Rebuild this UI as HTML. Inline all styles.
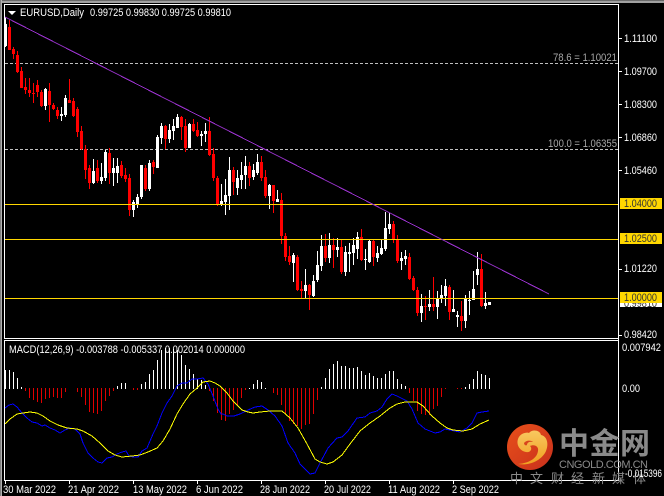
<!DOCTYPE html>
<html><head><meta charset="utf-8"><style>
html,body{margin:0;padding:0;background:#000;width:664px;height:496px;overflow:hidden}
svg{display:block}
text{font-family:"Liberation Sans","Noto Sans CJK SC",sans-serif;font-size:11px;fill:#fff}
.y{fill:#333}
</style></head><body>
<svg width="664" height="496" viewBox="0 0 664 496" xmlns="http://www.w3.org/2000/svg">
<rect width="664" height="496" fill="#000"/>
<g shape-rendering="crispEdges">
<rect width="664" height="1" fill="#6a6a6a"/><rect y="1" width="664" height="2" fill="#a0a0a0"/>
<rect width="1" height="496" fill="#808080"/><rect x="1" width="1" height="496" fill="#b0b0b0"/>
<path d="M4.5 4V339M4 4.5H619M618.5 4V481M4 338.5H619M4 340.5H619M4.5 340V481M4 480.5H619" stroke="#fff" fill="none"/>
<path d="M619 38.5h3M619 71.5h3M619 104.5h3M619 137.5h3M619 170.5h3M619 269.5h3M619 335.5h3M5.500 481v3M69.500 481v3M133.500 481v3M197.500 481v3M261.500 481v3M325.500 481v3M389.500 481v3M453.500 481v3" stroke="#fff" fill="none"/>
<path d="M5 63.500H618M5 149.500H618" stroke="#c0c0c0" stroke-dasharray="3 2" fill="none"/>
</g>
<!-- candles -->
<g shape-rendering="crispEdges" fill="none">
<path stroke="#fff" d="M5.500 17V47M45.500 88V110M61.500 107V121M65.500 95V117M93.500 159V184M101.500 163V184M105.500 150V181M113.500 158V186M117.500 158V183M133.500 200V217M137.500 194V208M141.500 165V199M149.500 160V191M157.500 135V168M161.500 123V144M169.500 124V143M173.500 119V140M177.500 114V128M189.500 123V148M201.500 131V146M205.500 123V142M221.500 184V206M225.500 179V215M229.500 157V210M237.500 170V195M241.500 162V189M245.500 156V189M253.500 164V180M257.500 154V175M269.500 184V209M277.500 190V202M293.500 253V282M305.500 269V298M313.500 275V297M317.500 251V282M321.500 235V271M329.500 233V263M337.500 238V257M345.500 246V276M349.500 243V272M353.500 238V265M357.500 232V259M365.500 249V270M369.500 240V263M377.500 246V262M381.500 239V255M385.500 212V251M389.500 213V234M401.500 252V270M405.500 250V265M421.500 294V322M429.500 290V311M437.500 291V319M441.500 285V303M445.500 279V306M453.500 290V312M457.500 311V327M465.500 295V328M469.500 291V315M473.500 271V300M477.500 252V285M485.500 292V309"/>
<path stroke="#fff" stroke-width="3" d="M5.500 24V46M45.500 89V106M61.500 114V116M65.500 98V115M93.500 171V183M101.500 177V181M105.500 152V178M113.500 168V173M117.500 166V173M133.500 202V210M137.500 197V204M141.500 165V197M149.500 163V189M157.500 137V168M161.500 126V138M169.500 130V139M173.500 126V131M177.500 117V128M189.500 124V148M201.500 134V136M205.500 131V134M221.500 201V205M225.500 195V202M229.500 170V196M237.500 178V188M241.500 175V180M245.500 166V175M253.500 170V177M257.500 162V173M269.500 185V196M277.500 199V202M293.500 255V263M305.500 285V291M313.500 281V296M317.500 265V280M321.500 246V266M329.500 245V258M337.500 247V250M345.500 252V272M349.500 252V254M353.500 245V253M357.500 237V249M365.500 259V260M369.500 241V262M377.500 253V258M381.500 248V254M385.500 228V249M389.500 224V229M401.500 258V261M405.500 256V259M421.500 306V313M429.500 304V307M437.500 299V307M441.500 295V299M445.500 286V296M453.500 309V312M457.500 315V317M465.500 299V321M469.500 300V301M473.500 289V300M477.500 269V275M485.500 303V306M489.500 302V305"/>
<path stroke="#f00" d="M9.500 20V50M13.500 47V59M17.500 51V73M21.500 67V88M25.500 78V94M29.500 78V97M33.500 83V103M37.500 80V97M41.500 90V107M49.500 83V122M53.500 103V110M57.500 107V119M69.500 79V103M73.500 98V117M77.500 107V137M81.500 126V150M85.500 145V179M89.500 165V189M97.500 160V183M109.500 148V184M121.500 161V178M125.500 168V182M129.500 174V216M145.500 165V191M153.500 160V174M165.500 125V149M181.500 116V140M185.500 119V152M193.500 119V132M197.500 122V137M209.500 117V156M213.500 148V181M217.500 176V206M233.500 167V195M249.500 162V186M261.500 156V181M265.500 170V198M273.500 185V213M281.500 193V244M285.500 233V261M289.500 246V265M297.500 255V291M301.500 281V298M309.500 284V310M325.500 234V262M333.500 238V268M341.500 240V274M361.500 229V261M373.500 240V266M393.500 221V243M397.500 235V263M409.500 253V280M413.500 276V291M417.500 287V316M425.500 296V320M433.500 277V311M449.500 285V320M461.500 301V331M481.500 254V307"/>
<path stroke="#f00" stroke-width="3" d="M9.500 27V50M13.500 49V54M17.500 55V72M21.500 71V88M25.500 87V90M29.500 90V93M33.500 93V94M37.500 85V92M41.500 92V106M49.500 91V105M53.500 105V109M57.500 110V116M69.500 100V103M73.500 101V116M77.500 109V132M81.500 131V149M85.500 149V170M89.500 168V183M97.500 168V181M109.500 153V173M121.500 165V176M125.500 175V179M129.500 178V210M145.500 168V189M153.500 162V167M165.500 126V139M181.500 117V127M185.500 126V148M193.500 124V131M197.500 130V136M209.500 131V155M213.500 154V178M217.500 178V205M233.500 170V182M249.500 166V178M261.500 162V178M265.500 177V196M273.500 185V201M281.500 200V236M285.500 236V257M289.500 256V262M297.500 257V290M301.500 289V291M309.500 285V295M325.500 246V258M333.500 245V250M341.500 247V272M361.500 237V260M373.500 241V257M393.500 224V239M397.500 239V261M409.500 257V279M413.500 278V290M417.500 290V313M425.500 306V307M433.500 304V307M449.500 287V312M461.500 316V321M481.500 269V306"/>
</g>
<!-- level lines -->
<g shape-rendering="crispEdges">
<rect x="5" y="204" width="613" height="1" fill="#ffd700"/>
<rect x="5" y="239" width="613" height="1" fill="#ffd700"/>
<rect x="5" y="298" width="613" height="1" fill="#ffd700"/>
<line x1="5" y1="17" x2="549" y2="294" stroke="#9932cc"/>
</g>
<!-- MACD hist -->
<g shape-rendering="crispEdges" fill="none">
<path stroke="#fff" d="M5.500 370V389M9.500 370V389M13.500 372V389M17.500 378V389M21.500 387V389M117.500 386V389M121.500 383V389M125.500 383V389M141.500 384V389M145.500 382V389M149.500 374V389M153.500 370V389M157.500 360V389M161.500 350V389M165.500 348V389M169.500 348V389M173.500 349V389M177.500 350V389M181.500 355V389M185.500 365V389M189.500 369V389M193.500 374V389M197.500 379V389M201.500 380V389M205.500 385V389M249.500 388V389M253.500 384V389M257.500 380V389M261.500 382V389M265.500 388V389M321.500 387V389M325.500 378V389M329.500 369V389M333.500 364V389M337.500 361V389M341.500 366V389M345.500 366V389M349.500 368V389M353.500 368V389M357.500 367V389M361.500 371V389M365.500 375V389M369.500 373V389M373.500 376V389M377.500 378V389M381.500 378V389M385.500 374V389M389.500 371V389M393.500 371V389M397.500 379V389M401.500 384V389M405.500 386V389M465.500 387V389M469.500 384V389M473.500 379V389M477.500 371V389M481.500 374V389M485.500 375V389M489.500 378V389"/>
<path stroke="#e00000" d="M25.500 388V391M29.500 388V398M33.500 388V400M37.500 388V402M41.500 388V403M45.500 388V399M49.500 388V398M53.500 388V397M57.500 388V398M61.500 388V398M65.500 388V392M77.500 388V392M81.500 388V397M85.500 388V405M89.500 388V412M93.500 388V413M97.500 388V414M101.500 388V411M105.500 388V401M109.500 388V396M113.500 388V391M133.500 388V390M137.500 388V390M209.500 388V391M213.500 388V401M217.500 388V413M221.500 388V420M225.500 388V421M229.500 388V414M233.500 388V410M237.500 388V405M241.500 388V398M245.500 388V390M273.500 388V393M277.500 388V395M281.500 388V405M285.500 388V414M289.500 388V421M293.500 388V424M297.500 388V426M301.500 388V429M305.500 388V425M309.500 388V424M313.500 388V414M317.500 388V400M409.500 388V393M413.500 388V401M417.500 388V411M421.500 388V414M425.500 388V415M429.500 388V415M433.500 388V409M437.500 388V406M441.500 388V397M445.500 388V389M457.500 388V389M461.500 388V389"/>
</g>
<!-- MACD lines -->
<g fill="none" stroke-width="1" shape-rendering="crispEdges">
<polyline stroke="#0000ff" stroke-width="1" points="5,408 9,405 13,404 17,407 22,413 27,418 32,422 37,423 42,426 45,425 50,428 55,430 60,433 65,430 70,428 75,429 80,434 83,443 88,453 93,458 98,462 102,463 107,458 112,457 117,454 122,452 126,451 129,456 133,457 138,457 142,451 147,448 153,434 157,426 162,413 167,403 172,396 177,386 182,383 187,383 192,379 197,379 203,378 208,384 213,396 218,409 221,414 223,414 227,416 234,416 240,414 248,410 255,407 262,406 268,410 275,416 282,426 288,443 295,453 300,464 305,469 310,474 315,473 320,463 328,448 337,438 342,437 348,431 357,418 365,417 370,413 377,411 382,407 387,399 392,394 397,396 407,401 412,409 418,423 425,429 435,433 440,432 445,429 450,430 460,432 467,428 472,423 477,413 482,412 489,411"/>
<polyline stroke="#ffff00" stroke-width="1" points="5,424 10,419 17,414 23,413 30,412 37,413 43,416 50,421 58,425 67,428 77,429 83,431 92,436 100,443 108,451 115,455 122,457 132,456 140,455 148,452 157,448 163,441 170,429 177,414 183,404 190,394 197,388 203,382 210,381 215,383 220,386 227,393 233,401 242,410 248,412 253,413 260,412 270,411 282,411 290,418 298,428 307,444 315,459 320,462 327,464 333,462 342,455 350,444 360,431 370,423 380,416 390,408 397,404 405,402 417,402 423,406 432,416 440,423 447,428 453,430 463,431 472,429 480,424 489,420"/>
</g>
<!-- header text -->
<path d="M8 11h8l-4 4z" fill="#fff"/>
<text x="20" y="16" textLength="64" lengthAdjust="spacingAndGlyphs">EURUSD,Daily</text>
<text x="90" y="16" textLength="141" lengthAdjust="spacingAndGlyphs">0.99725 0.99830 0.99725 0.99810</text>
<text x="553" y="61" textLength="64" lengthAdjust="spacingAndGlyphs" style="fill:#a8a8a8">78.6 = 1.10021</text>
<text x="548" y="147" textLength="69" lengthAdjust="spacingAndGlyphs" style="fill:#a8a8a8">100.0 = 1.06355</text>
<!-- axis -->
<g>
<text x="624" y="42" textLength="33" lengthAdjust="spacingAndGlyphs">1.11100</text>
<text x="624" y="75" textLength="33" lengthAdjust="spacingAndGlyphs">1.09700</text>
<text x="624" y="108" textLength="33" lengthAdjust="spacingAndGlyphs">1.08300</text>
<text x="624" y="141" textLength="33" lengthAdjust="spacingAndGlyphs">1.06860</text>
<text x="624" y="174" textLength="33" lengthAdjust="spacingAndGlyphs">1.05460</text>
<text x="624" y="272" textLength="33" lengthAdjust="spacingAndGlyphs">1.01220</text>
<text x="624" y="338" textLength="33" lengthAdjust="spacingAndGlyphs">0.98420</text>
<rect x="620" y="198" width="42" height="11" fill="#ffd700"/>
<rect x="620" y="233" width="42" height="11" fill="#ffd700"/>
<rect x="620" y="303" width="42" height="4" fill="#fff"/>
<text class="y" x="624" y="307" textLength="33" lengthAdjust="spacingAndGlyphs">0.99810</text>
<text class="y" x="624" y="207" textLength="33" lengthAdjust="spacingAndGlyphs">1.04000</text>
<text class="y" x="624" y="242" textLength="33" lengthAdjust="spacingAndGlyphs">1.02500</text>
<rect x="620" y="292" width="42" height="11" fill="#ffd700"/>
<text class="y" x="624" y="301" textLength="33" lengthAdjust="spacingAndGlyphs">1.00000</text>
<text x="9" y="353" textLength="236" lengthAdjust="spacingAndGlyphs">MACD(12,26,9) -0.003788 -0.005337 0.002014 0.000000</text>
<text x="622" y="351" textLength="39" lengthAdjust="spacingAndGlyphs">0.007942</text>
<text x="622" y="392" textLength="18" lengthAdjust="spacingAndGlyphs">0.00</text>
<text x="3" y="493" textLength="53" lengthAdjust="spacingAndGlyphs">30 Mar 2022</text>
<text x="68" y="493" textLength="51" lengthAdjust="spacingAndGlyphs">21 Apr 2022</text>
<text x="133" y="493" textLength="54" lengthAdjust="spacingAndGlyphs">13 May 2022</text>
<text x="196" y="493" textLength="47" lengthAdjust="spacingAndGlyphs">6 Jun 2022</text>
<text x="260" y="493" textLength="50" lengthAdjust="spacingAndGlyphs">28 Jun 2022</text>
<text x="324" y="493" textLength="47" lengthAdjust="spacingAndGlyphs">20 Jul 2022</text>
<text x="388" y="493" textLength="52" lengthAdjust="spacingAndGlyphs">11 Aug 2022</text>
<text x="452" y="493" textLength="47" lengthAdjust="spacingAndGlyphs">2 Sep 2022</text>
</g>
<!-- watermark -->
<defs><linearGradient id="g" x1="0" y1="0" x2="1" y2="1"><stop offset="0" stop-color="#e8501a"/><stop offset="1" stop-color="#c8301c"/></linearGradient>
<linearGradient id="s" x1="0" y1="0" x2="0" y2="1"><stop offset="0" stop-color="#f8c860"/><stop offset="1" stop-color="#f0a020"/></linearGradient></defs>
<circle cx="530" cy="447" r="23" fill="url(#g)"/>
<path d="M518 464C530 463 537 458 538 451C539 446 534 444 530 446C533 449 530 453 526 452C520 451 516 445 518 439C520 433 527 432 529 433C532 429 540 430 541 435C547 436 549 444 546 451C542 460 530 466 518 464Z" fill="url(#s)"/>
<path d="M524 443C526 440 531 440 533 442C529 441 527 443 527 445C526 446 524 445 524 443Z" fill="#d8451c"/>
<text x="559" y="454" style="font-family:'Noto Sans CJK SC',sans-serif;font-size:30px;font-weight:700;fill:#8a8a8a" textLength="91">中金网</text>
<text x="559" y="468" textLength="89" style="fill:#8a8a8a">CNGOLD.COM.CN</text>
<text x="510" y="483" style="font-family:'Noto Sans CJK SC',sans-serif;font-size:13px;fill:#8a8a8a"><tspan x="510">中</tspan><tspan x="530">文</tspan><tspan x="551">财</tspan><tspan x="571">经</tspan><tspan x="592">新</tspan><tspan x="612">媒</tspan><tspan x="633">体</tspan></text>
<text x="625" y="477" textLength="37" lengthAdjust="spacingAndGlyphs">-0.015396</text>
</svg>
</body></html>
